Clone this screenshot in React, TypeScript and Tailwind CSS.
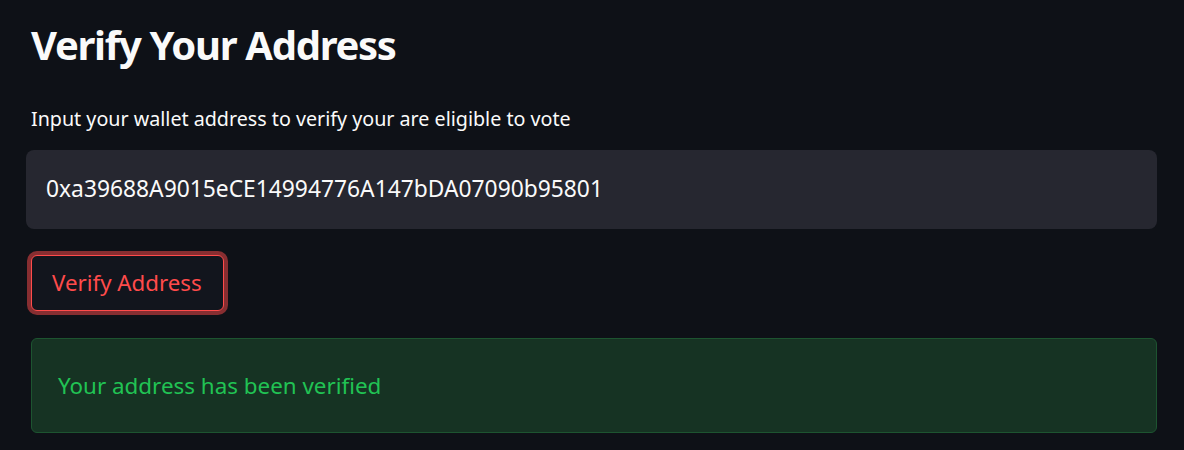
import React from 'react';

const App: React.FC = () => {
  return (
    <div
      className="min-h-[450px] w-full bg-[#0e1117] text-[#fafafa]"
      style={{ fontFamily: '"Noto Sans", sans-serif' }}
    >
      <div className="flex flex-col pl-[31px] pr-[27px] pt-[21px]">
        {/* Title */}
        <h1 className="text-[40px] leading-[48px] font-bold tracking-[-1.3px]">Verify Your Address</h1>

        {/* Label */}
        <label className="mt-[36px] text-[19.7px] leading-[28px]">
          Input your wallet address to verify your are eligible to vote
        </label>

        {/* Input */}
        <div className="-ml-[5px] mt-[17px] flex h-[79px] items-center rounded-lg bg-[#262730] pl-[20px]">
          <span className="text-[22.8px]">0xa39688A9015eCE14994776A147bDA07090b95801</span>
        </div>

        {/* Button */}
        <div className="mt-[26px]">
          <button className="h-[56px] rounded-md border border-[#ff4b4b] bg-[#12151d] pl-[20px] pr-[21px] text-[22.3px] text-[#ff4b4b] shadow-[0_0_0_4px_rgba(255,75,75,0.5)]">
            Verify Address
          </button>
        </div>

        {/* Success */}
        <div className="mt-[27px] flex h-[95px] items-center rounded-md border border-[#1d5430] bg-[#163323] pl-[26px]">
          <span className="text-[22.4px] text-[#21c354]">Your address has been verified</span>
        </div>
      </div>
    </div>
  );
};

export default App;
